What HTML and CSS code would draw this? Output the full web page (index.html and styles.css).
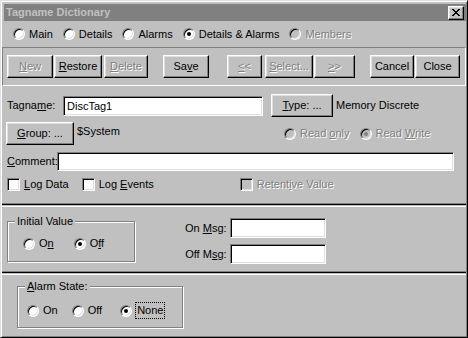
FILE: index.html
```html
<!DOCTYPE html>
<html>
<head>
  <meta charset="UTF-8">
  <title>Tagname Dictionary</title>
  <link rel="stylesheet" href="styles.css">
</head>
<body>

  <div class="window">
    <div class="titlebar">
      <span class="title">Tagname Dictionary</span>
      <span class="close">
        <svg width="8" height="7" viewBox="0 0 8 7" shape-rendering="crispEdges">
          <path d="M0 0h2v1h-2z M6 0h2v1h-2z M1 1h2v1h-2z M5 1h2v1h-2z M2 2h4v1h-4z M3 3h2v1h-2z M2 4h4v1h-4z M1 5h2v1h-2z M5 5h2v1h-2z M0 6h2v1h-2z M6 6h2v1h-2z" fill="#000"/>
        </svg>
      </span>
    </div>

    <div class="tabs">
      <span class="opt"><span class="radio"></span><span>Main</span></span>
      <span class="opt"><span class="radio"></span><span>Details</span></span>
      <span class="opt"><span class="radio"></span><span>Alarms</span></span>
      <span class="opt"><span class="radio on"></span><span>Details &amp; Alarms</span></span>
      <span class="opt off"><span class="radio"></span><span>Members</span></span>
    </div>

    <div class="toolbar">
      <span class="btn off b-new"><span><u>N</u>ew</span></span>
      <span class="btn b-restore"><span><u>R</u>estore</span></span>
      <span class="btn off b-delete"><span><u>D</u>elete</span></span>
      <span class="btn b-save"><span>Sa<u>v</u>e</span></span>
      <span class="btn off b-prev"><span><u>&lt;</u>&lt;</span></span>
      <span class="btn off b-select"><span><u>S</u>elect...</span></span>
      <span class="btn off b-next"><span><u>&gt;</u>&gt;</span></span>
      <span class="btn b-cancel"><span>Cancel</span></span>
      <span class="btn b-close"><span>Close</span></span>
    </div>

    <div class="panel fields">
      <div class="row">
        <span class="lbl lbl-name">Tagna<u>m</u>e:</span>
        <span class="field f-name">DiscTag1</span>
        <span class="btn b-type"><span><u>T</u>ype: ...</span></span>
        <span class="type-value">Memory Discrete</span>
      </div>
      <div class="row row-group">
        <span class="btn b-group"><span><u>G</u>roup: ...</span></span>
        <span class="group-value">$System</span>
        <span class="opt off"><span class="radio"></span><span>Read <u>o</u>nly</span></span>
        <span class="opt off"><span class="radio on"></span><span>Read <u>W</u>rite</span></span>
      </div>
      <div class="row row-comment">
        <span class="lbl"><u>C</u>omment:</span>
        <span class="field f-comment"></span>
      </div>
      <div class="row row-checks">
        <span class="opt"><span class="check"></span><span><u>L</u>og Data</span></span>
        <span class="opt"><span class="check"></span><span>Log <u>E</u>vents</span></span>
        <span class="opt off"><span class="check"></span><span>Retent<u>i</u>ve Value</span></span>
      </div>
    </div>

    <div class="panel values">
      <div class="group g-initial">
        <span class="group-title">Initial Value</span>
        <div class="group-body">
          <span class="opt"><span class="radio"></span><span>O<u>n</u></span></span>
          <span class="opt"><span class="radio on"></span><span>O<u>f</u>f</span></span>
        </div>
      </div>
      <div class="msgs">
        <span class="lbl">On <u>M</u>sg:</span>
        <span class="field f-msg"></span>
        <span class="lbl">Off M<u>s</u>g:</span>
        <span class="field f-msg"></span>
      </div>
    </div>

    <div class="panel alarm">
      <div class="group g-alarm">
        <span class="group-title"><u>A</u>larm State:</span>
        <div class="group-body">
          <span class="opt"><span class="radio"></span><span>On</span></span>
          <span class="opt"><span class="radio"></span><span>Off</span></span>
          <span class="opt opt-none"><span class="radio on"></span><span class="focus">None</span></span>
        </div>
      </div>
    </div>
  </div>

</body>
</html>
```

FILE: styles.css
```css
* {
  margin: 0;
  padding: 0;
  box-sizing: border-box;
}

body {
  background: #c0c0c0;
  font-family: "Liberation Sans", Arial, sans-serif;
  font-size: 11px;
  line-height: 13px;
  color: #000;
}

.window {
  width: 468px;
  height: 338px;
  border: 1px solid;
  border-color: #dfdfdf #000 #000 #dfdfdf;
  box-shadow: inset 1px 1px 0 #fff, inset -1px -1px 0 #808080;
  padding: 1px;
  display: flex;
  flex-direction: column;
}

/* title */
.titlebar {
  height: 17px;
  margin: 2px 0 0 2px;
  background: #808080;
  display: flex;
  align-items: center;
  justify-content: space-between;
  padding: 0 2px 0 2px;
}
.title {
  color: #c0c0c0;
  font-weight: bold;
}
.close {
  width: 16px;
  height: 14px;
  background: #c0c0c0;
  border: 1px solid;
  border-color: #fff #000 #000 #fff;
  box-shadow: inset -1px -1px 0 #808080, inset 1px 1px 0 #dfdfdf;
  display: flex;
  align-items: center;
  justify-content: center;
}

/* common controls */
.opt {
  display: flex;
  align-items: center;
  white-space: nowrap;
}
.opt.off {
  color: #808080;
  text-shadow: 1px 1px 0 #fff;
}
.radio {
  position: relative;
  width: 12px;
  height: 12px;
  margin-right: 4px;
  border-radius: 50%;
  border: 1px solid;
  border-color: #808080 #fff #fff #808080;
  background: #fff;
  box-shadow: inset 1px 1px 0 #000, inset -1px -1px 0 #dfdfdf;
  flex: none;
}
.radio.on::after {
  content: "";
  position: absolute;
  left: 3px;
  top: 3px;
  width: 4px;
  height: 4px;
  border-radius: 50%;
  background: #000;
}
.off .radio {
  background: #c0c0c0;
}
.off .radio.on::after {
  background: #808080;
}
.check {
  width: 13px;
  height: 13px;
  margin-right: 4px;
  border: 1px solid;
  border-color: #808080 #fff #fff #808080;
  background: #fff;
  box-shadow: inset 1px 1px 0 #000, inset -1px -1px 0 #dfdfdf;
  flex: none;
}
.off .check {
  background: #c0c0c0;
}
.btn {
  height: 23px;
  display: flex;
  align-items: center;
  justify-content: center;
  background: #c0c0c0;
  border: 1px solid;
  border-color: #fff #000 #000 #fff;
  box-shadow: inset -1px -1px 0 #808080, inset 1px 1px 0 #dfdfdf;
  white-space: nowrap;
  flex: none;
}
.btn.off {
  color: #808080;
  text-shadow: 1px 1px 0 #fff;
}
.field {
  height: 20px;
  padding: 3px 3px 0;
  background: #fff;
  border: 1px solid;
  border-color: #808080 #fff #fff #808080;
  box-shadow: inset 1px 1px 0 #000, inset -1px -1px 0 #dfdfdf;
  flex: none;
}
.lbl {
  white-space: nowrap;
}

/* radio tabs */
.tabs {
  height: 26px;
  display: flex;
  align-items: center;
  gap: 10px;
  padding-left: 11px;
}

/* buttons row */
.toolbar {
  height: 39px;
  display: flex;
  align-items: center;
  padding-left: 4px;
  border: 1px solid;
  border-color: #808080 #fff #fff #808080;
}
.b-new { width: 46px; }
.b-restore { width: 48px; margin-left: 1px; }
.b-delete { width: 44px; margin-left: 2px; }
.b-save { width: 46px; margin-left: 15px; }
.b-prev { width: 35px; margin-left: 18px; }
.b-select { width: 48px; margin-left: 3px; }
.b-next { width: 41px; margin-left: 1px; }
.b-cancel { width: 44px; margin-left: 15px; }
.b-close { width: 45px; margin-left: 1px; }

/* main fields */
.fields {
  height: 119px;
  padding: 8px 0 0 4px;
  border-bottom: 1px solid #000;
  box-shadow: inset 0 -1px 0 #808080;
}
.row {
  display: flex;
  align-items: center;
}
.lbl-name {
  width: 57px;
  padding-left: 1px;
}
.f-name {
  width: 200px;
}
.b-type {
  width: 62px;
  margin-left: 8px;
}
.type-value {
  margin-left: 3px;
}
.row-group {
  margin-top: 5px;
}
.b-group {
  width: 68px;
}
.group-value {
  width: 210px;
  padding-left: 3px;
  align-self: flex-start;
  padding-top: 3px;
}
.row-group .opt + .opt {
  margin-left: 10px;
}
.row-comment {
  margin-top: 7px;
}
.row-comment .lbl {
  width: 51px;
  padding-left: 1px;
}
.f-comment {
  width: 397px;
  height: 19px;
}
.row-checks {
  margin-top: 7px;
  padding-left: 1px;
}
.row-checks .opt:nth-child(2) {
  margin-left: 13px;
}
.row-checks .opt:nth-child(3) {
  margin-left: 86px;
}

/* group boxes */
.group {
  border: 1px solid #808080;
  box-shadow: inset 1px 1px 0 #fff, 1px 1px 0 #fff;
}
.group-title {
  display: table;
  margin: -7px 0 0 7px;
  padding: 0 2px;
  background: #c0c0c0;
}
.group-body {
  display: flex;
  align-items: center;
}

.values {
  height: 67px;
  display: flex;
  align-items: flex-start;
  padding: 11px 0 0 5px;
  border-top: 1px solid #fff;
  border-bottom: 1px solid #000;
  box-shadow: inset 0 -1px 0 #808080;
  margin-top: 1px;
}
.g-initial {
  width: 128px;
  height: 41px;
  margin-top: 3px;
}
.g-initial .group-body {
  padding: 9px 0 0 15px;
  gap: 20px;
}
.msgs {
  display: grid;
  grid-template-columns: auto 96px;
  column-gap: 3px;
  row-gap: 6px;
  align-items: center;
  justify-items: end;
  margin-left: 50px;
}
.f-msg {
  height: 20px;
  width: 96px;
}

.alarm {
  flex: 1;
  padding: 11px 0 0 15px;
  border-top: 1px solid #fff;
  margin-top: 1px;
}
.g-alarm {
  width: 166px;
  height: 42px;
}
.g-alarm .group-body {
  padding: 10px 0 0 9px;
  gap: 14px;
}
.g-alarm .opt-none {
  margin-left: 4px;
}
.focus {
  outline: 1px dotted #000;
  padding: 1px 1px;
}
```
